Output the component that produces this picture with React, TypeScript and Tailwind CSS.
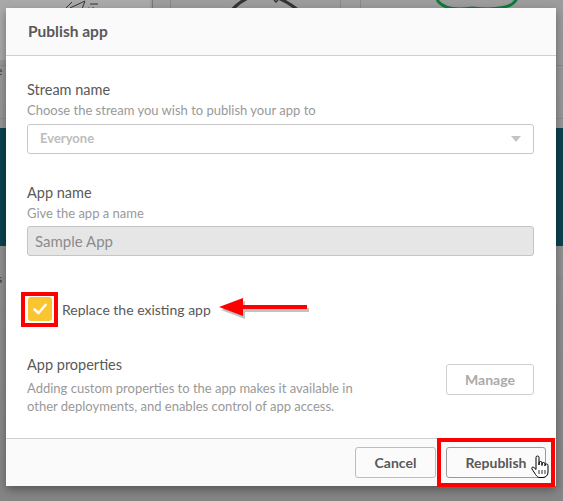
import type { ReactNode } from "react";

const font = { fontFamily: "Lato, 'Open Sans', sans-serif" };

function Backdrop() {
  return (
    <div className="absolute inset-0 bg-gradient-to-b from-[#9c9c9c] to-[#858585]">
      {/* top strip of the app behind the overlay */}
      <div className="absolute left-0 top-0 h-[60px] w-[150px] bg-[#a9a9a9]">
        <svg width="150" height="12" viewBox="0 0 150 12">
          <path d="M62 12 L72 2 M70 8 L85 1 L82 9 M90 4 h8" stroke="#333" strokeWidth="1" fill="none" />
          <text x="88" y="11" fontSize="6" fill="#333">kA</text>
        </svg>
      </div>
      <div className="absolute left-[152px] top-0 h-[8px] w-px bg-[#777]" />
      <div className="absolute left-[170px] top-0 h-[8px] w-px bg-[#888]" />
      <div className="absolute left-[340px] top-0 h-[8px] w-px bg-[#888]" />
      <div className="absolute left-[360px] top-0 h-[8px] w-px bg-[#888]" />
      <svg className="absolute left-0 top-0" width="563" height="10" viewBox="0 0 563 10">
        <path d="M228 14 Q 258 -22 298 10" stroke="#333" strokeWidth="3" fill="none" />
        <path d="M274 0 l2 2 l2 -2" stroke="#333" strokeWidth="1.5" fill="none" />
        <path d="M437 0 Q 445 12 472 8 Q 512 12 517 -2" stroke="#0f7a3a" strokeWidth="3" fill="none" />
      </svg>
      {/* sides */}
      <div className="absolute left-0 top-[65px] h-px w-[563px] bg-[#8a8a8a]" />
      <div className="absolute left-0 top-[118px] h-px w-[563px] bg-[#8a8a8a]" />
      <div className="absolute left-0 top-[128px] h-[118px] w-[563px] bg-[#0d4150]" />
      <div className="absolute left-0 top-[278px] h-px w-[563px] bg-[#8a8a8a]" />
      <div className="absolute left-0 top-[310px] h-px w-[563px] bg-[#8a8a8a]" />
      <span className="absolute left-[-4px] top-[62px] text-[12px] text-[#333]" style={font}>e</span>
      <span className="absolute left-[-3px] top-[270px] text-[12px] text-[#333]" style={font}>s</span>
    </div>
  );
}

function Label({ children }: { children: ReactNode }) {
  return <div className="text-[14.5px] leading-[20px] text-[#595959]">{children}</div>;
}

function Hint({ children }: { children: ReactNode }) {
  return <div className="text-[13px] leading-[20px] text-[#999]">{children}</div>;
}

function HandCursor() {
  return (
    <svg width="18" height="24" viewBox="0 0 18 24" className="absolute left-[531px] top-[455px]">
      <path
        d="M5 2.5 a1.5 1.5 0 0 1 3 0 V10 V8 a1.5 1.5 0 0 1 3 0 V10.5 V9 a1.5 1.5 0 0 1 3 0 V11 V10.5 a1.5 1.5 0 0 1 3 0 V17 c0 3 -2 5.5 -5 5.5 H9 c-2 0 -3 -1 -4.5 -3 L1 14 c-0.8 -1.2 0.6 -2.6 1.8 -1.6 L5 14.5 Z"
        fill="#fff"
        stroke="#000"
        strokeWidth="1"
        strokeLinejoin="round"
      />
      <path d="M8 15 v4 M11 15 v4 M14 15 v4" stroke="#000" strokeWidth="0.8" />
    </svg>
  );
}

export default function App() {
  return (
    <div className="relative w-[563px] h-[501px] overflow-hidden" style={font}>
      <Backdrop />

      <div className="absolute left-[6px] top-[8px] w-[550px] h-[478px] flex flex-col bg-white rounded-[2px] shadow-[0_4px_10px_rgba(0,0,0,0.35)]">
        <div className="h-[48px] shrink-0 flex items-center px-[22px] bg-[#fafafa] border-b border-[#cfcfcf]">
          <h2 className="text-[15.5px] font-bold text-[#595959]">Publish app</h2>
        </div>

        <div className="flex-1 flex flex-col pl-[21px] pr-[22px] pt-[24px]">
          <Label>Stream name</Label>
          <Hint>Choose the stream you wish to publish your app to</Hint>
          <div className="mt-[4px] h-[30px] flex items-center justify-between border border-[#c8c8c8] rounded-[3px] px-[12px]">
            <span className="text-[13px] font-bold text-[#bdbdbd]">Everyone</span>
            <svg width="10" height="6" viewBox="0 0 10 6">
              <path d="M0 0 H10 L5 6 Z" fill="#c4c4c4" />
            </svg>
          </div>

          <div className="mt-[29px]">
            <Label>App name</Label>
            <Hint>Give the app a name</Hint>
          </div>
          <div className="mt-[3px] h-[30px] flex items-center bg-[#e6e6e6] border border-[#c4c4c4] rounded-[3px] px-[7px]">
            <span className="text-[15px] text-[#8c8c8c]">Sample App</span>
          </div>

          <div className="mt-[41px] flex items-center h-[24px]">
            <div className="relative w-[24px] h-[24px] ml-[1px] rounded-[3px] bg-[#fbc431] flex items-center justify-center">
              <svg width="14" height="12" viewBox="0 0 14 12">
                <path d="M1.5 6.5 L5.5 10 L12.5 2" stroke="#fff" strokeWidth="2.6" fill="none" strokeLinecap="round" strokeLinejoin="round" />
              </svg>
              <div className="absolute -left-[7px] -top-[5px] w-[37px] h-[35px] border-[4px] border-[#ff0000]" />
            </div>
            <span className="ml-[10px] text-[14px] text-[#595959]">Replace the existing app</span>
            <svg width="92" height="26" viewBox="0 0 92 26" className="ml-[8px] mt-[2px]">
              <g transform="translate(2 3)">
                <path d="M24 8 H88 V12 H24 Z M0 10 L24 1 V19 Z" fill="#9a9a9a" opacity="0.6" />
              </g>
              <path d="M24 8 H88 V12 H24 Z M0 10 L24 1 V19 Z" fill="#ff0000" />
            </svg>
          </div>

          <div className="mt-[34px] flex items-start justify-between">
            <div>
              <Label>App properties</Label>
              <div className="mt-[4px] text-[13px] leading-[18px] text-[#999]">
                Adding custom properties to the app makes it available in
                <br />
                other deployments, and enables control of app access.
              </div>
            </div>
            <button className="mt-[9px] w-[88px] h-[31px] border border-[#cfcfcf] rounded-[3px] text-[14px] font-bold text-[#aaaaaa]">
              Manage
            </button>
          </div>
        </div>

        <div className="relative h-[48px] shrink-0 flex items-center justify-end gap-[10px] pr-[10px] bg-[#fafafa] border-t border-[#cfcfcf]">
          <button className="w-[81px] h-[31px] border border-[#bdbdbd] rounded-[3px] bg-[#fbfbfb] text-[14px] font-bold text-[#595959]">
            Cancel
          </button>
          <button className="w-[100px] h-[31px] border border-[#9a9a9a] rounded-[3px] bg-[#fbfbfb] text-[14px] font-bold text-[#595959]">
            Republish
          </button>
          <div className="absolute left-[431px] top-[-1px] w-[118px] h-[49px] border-[4px] border-[#ff0000]" />
        </div>
      </div>

      <HandCursor />
    </div>
  );
}
